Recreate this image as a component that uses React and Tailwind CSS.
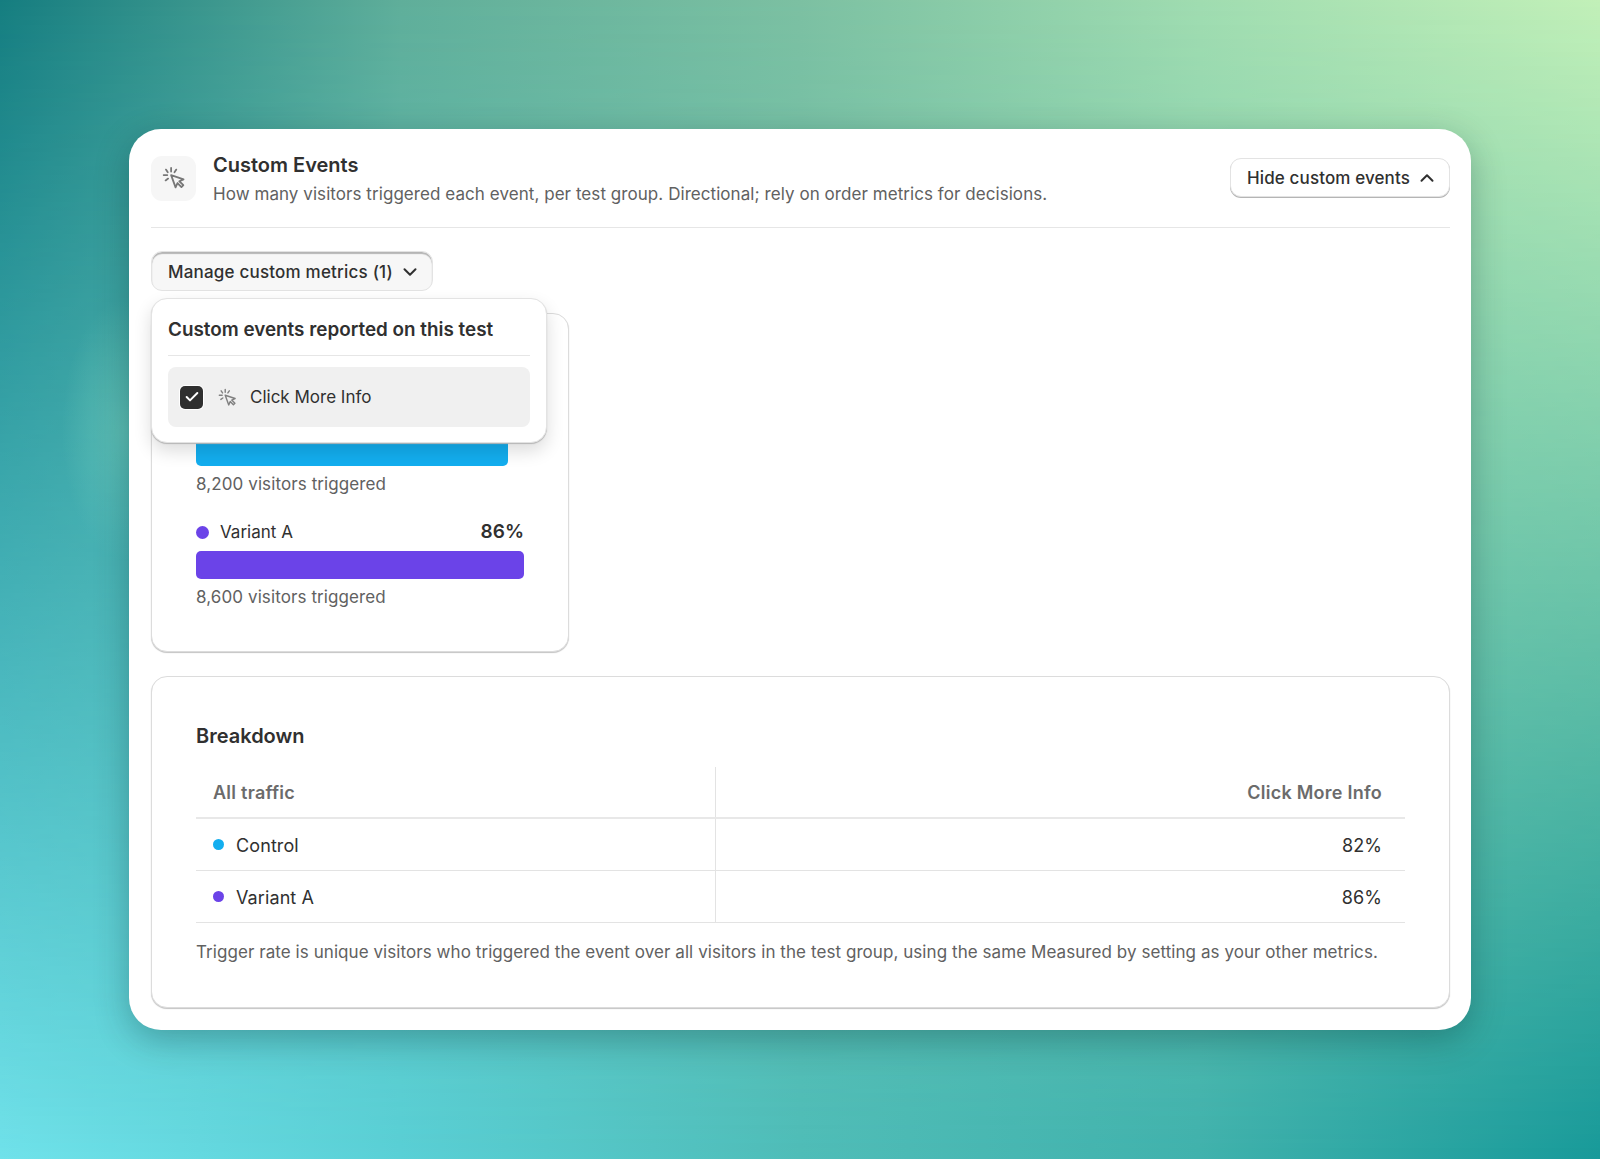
import React from "react";
import { Check, ChevronDown, ChevronUp } from "lucide-react";

const groups = [
	{ name: "Control", pct: "82%", note: "8,200 visitors triggered", dot: "bg-[#13aeef]", bar: "bg-[#13aeef] w-[312px]" },
	{ name: "Variant A", pct: "86%", note: "8,600 visitors triggered", dot: "bg-[#6b43e8]", bar: "bg-[#6b43e8] w-full" },
];

// CURSOR WITH CLICK RAYS
function CursorIcon({ className }) {
	return (
		<svg viewBox="0 0 20 20" fill="none" stroke="currentColor" strokeWidth="1.5" strokeLinecap="round" strokeLinejoin="round" className={className}>
			<path d="M7.6 1.6v3M11.9 3 10.4 5.2M3.3 3l1.5 2.2M1.4 7.6h3M3 12l2.1-1.5" />
			<path d="M7.6 7.6l10.4 3.5-3.6 1.6 3.4 3.3-1.6 1.6-3.3-3.4-1.6 3.6z" />
		</svg>
	);
}

function App() {
	return (
		<div className="relative h-[1159px] overflow-hidden px-[129px] pt-[129px] font-['Inter',sans-serif] text-[#303030] bg-[linear-gradient(to_right,#70e2ea_0%,#5ad0d6_25%,#4fbdb8_50%,#40b2ad_75%,#189a9a_100%)]">
			{/*BACKGROUND TOP FADE*/}
			<div className="absolute inset-0 bg-[radial-gradient(ellipse_62px_130px_at_124px_430px,#62b49cbb_0%,#62b49c00_100%),linear-gradient(to_right,#157d80_0%,#5fae9a_25%,#7cc0a2_50%,#a0dcb0_75%,#c2f0b8_100%)] [mask-image:linear-gradient(to_bottom,#000_0%,#0000_100%)]" />

			{/*MAIN CARD*/}
			<div className="relative rounded-[32px] bg-white pb-[22px] pl-[22px] pr-[21px] pt-[22px] shadow-[0_10px_34px_rgba(0,40,40,0.3)]">
				{/*HEADER*/}
				<div className="flex items-center gap-[17px] border-b border-[#e6e6e6] pb-[21px]">
					<div className="flex h-[45px] w-[45px] items-center justify-center rounded-[11px] bg-[#f6f6f6]">
						<CursorIcon className="-mt-[2px] h-[24px] w-[24px] text-[#777777]" />
					</div>
					<div className="flex-1">
						<h1 className="text-[20px] font-semibold leading-7">Custom Events</h1>
						<p className="mt-[3px] text-[17px] leading-6 tracking-[0.06px] text-[#616161]">
							How many visitors triggered each event, per test group. Directional; rely on order metrics for decisions.
						</p>
					</div>
					<button className="mb-[2px] flex h-[39px] items-center gap-[6px] rounded-[11px] border border-[#e3e3e3] bg-white pl-4 pr-[11px] text-[17px] font-medium tracking-[0.12px] text-[#303030] shadow-[0_1px_0_#b5b5b5]">
						<span className="pt-[2px]">Hide custom events</span>
						<ChevronUp className="h-[22px] w-[22px]" strokeWidth={2.2} />
					</button>
				</div>

				{/*MANAGE BUTTON*/}
				<button className="mt-[23px] flex h-[40px] items-center gap-[6px] rounded-[11px] border border-[#e3e3e3] bg-[#f7f7f7] pl-4 pr-[11px] text-[17px] font-medium tracking-[0.2px] text-[#303030] shadow-[inset_0_2px_1px_#b5b5b5]">
					<span className="pt-[3px]">Manage custom metrics (1)</span>
					<ChevronDown className="mt-[2px] h-[22px] w-[22px]" strokeWidth={2.2} />
				</button>

				{/*POPOVER*/}
				<div className="absolute left-[22px] top-[169px] z-10 w-[396px] rounded-[16px] border border-[#e3e3e3] bg-white px-4 shadow-[0_1px_1px_#b5b5b5,0_8px_18px_rgba(0,0,0,0.14)]">
					<div className="border-b border-[#e6e6e6] pb-[11px] pt-[17px] text-[18.85px] font-semibold leading-7">
						Custom events reported on this test
					</div>
					<div className="mb-[15px] mt-[11px] flex h-[60px] items-center rounded-[8px] bg-[#f0f0f0] pl-[12px] text-[17px] text-[#303030]">
						<span className="flex h-[23px] w-[23px] items-center justify-center rounded-[5px] bg-[#2f2f2f] shadow-[0_0_0_1px_#ffffff]">
							<Check className="h-[16px] w-[16px] text-white" strokeWidth={3} />
						</span>
						<CursorIcon className="ml-[15px] h-[19px] w-[19px] text-[#808080]" />
						<span className="ml-[13px] pt-[2px]">Click More Info</span>
					</div>
				</div>

				{/*GROUP RATES*/}
				<div className="mt-[22px] w-[418px] rounded-[16px] border border-[#dcdcdc] bg-white pb-[42px] pl-[44px] pr-[44px] pt-[43px] shadow-[0_1px_1px_#c4c4c4]">
					<div className="text-[20px] font-semibold leading-7">Click More Info</div>
					{groups.map((g, i) => (
						<div key={g.name} className={i === 0 ? "mt-[22px]" : "mt-[24px]"}>
							<div className="flex h-[24px] items-center justify-between pt-[1px] text-[17px]">
								<span className="flex items-center gap-[11px]">
									<span className={`-mt-[1px] h-[13px] w-[13px] rounded-full ${g.dot}`} />
									{g.name}
								</span>
								<span className="text-[19px] font-semibold">{g.pct}</span>
							</div>
							<div className={`mt-[7px] h-[28px] rounded-[5px] ${g.bar}`} />
							<div className="mt-[6px] text-[17px] leading-6 tracking-[0.1px] text-[#616161]">{g.note}</div>
						</div>
					))}
				</div>

				{/*BREAKDOWN*/}
				<div className="mt-[24px] rounded-[16px] border border-[#dcdcdc] bg-white px-[44px] pb-[43px] pt-[45px] shadow-[0_1px_1px_#c4c4c4]">
					<h2 className="text-[20px] font-semibold leading-7">Breakdown</h2>
					<div className="mt-[17px] border-b border-[#e3e3e3] text-[18px] tracking-[0.1px]">
						<div className="flex h-[52px] items-center border-b-2 border-[#e8e8e8] font-semibold tracking-[0.25px] text-[#6b6b6b]">
							<div className="flex h-full w-[520px] items-center border-r border-[#e3e3e3] pl-[17px]">All traffic</div>
							<div className="flex-1 pr-[23px] text-right">Click More Info</div>
						</div>
						{groups.map((g, i) => (
							<div key={g.name} className={i === 0 ? "flex h-[52px] items-center border-b border-[#e3e3e3]" : "flex h-[51px] items-center"}>
								<div className="flex h-full w-[520px] items-center border-r border-[#e3e3e3] pl-[17px]">
									<span className={`h-[11px] w-[11px] rounded-full ${g.dot}`} />
									<span className="ml-[12px] pt-[1px]">{g.name}</span>
								</div>
								<div className="flex-1 pr-[23px] pt-[1px] text-right">{g.pct}</div>
							</div>
						))}
					</div>
					<p className="mt-[17px] text-[17px] leading-6 tracking-[0.065px] text-[#616161]">
						Trigger rate is unique visitors who triggered the event over all visitors in the test group, using the same Measured by setting as your other metrics.
					</p>
				</div>
			</div>
		</div>
	);
}

export default App;
